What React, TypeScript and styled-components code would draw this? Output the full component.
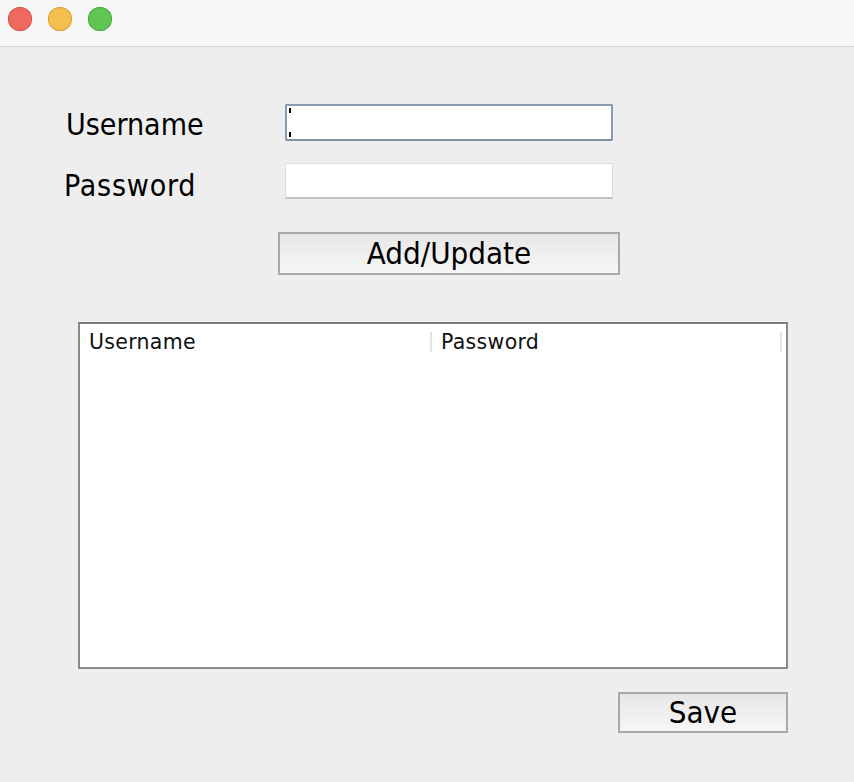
import React from "react";
import styled, { createGlobalStyle } from "styled-components";

const Global = createGlobalStyle`
  html, body { margin: 0; padding: 0; background: #eeeeee; }
  body { font-family: "DejaVu Sans", "Liberation Sans", sans-serif; color: #000; }
`;

const Window = styled.div`
  width: 854px;
  height: 782px;
  display: flex;
  flex-direction: column;
  background: #eeeeee;
  overflow: hidden;
`;

const TitleBar = styled.div`
  flex: none;
  box-sizing: border-box;
  height: 47px;
  background: #f6f6f6;
  border-bottom: 1px solid #d4d4d4;
  display: flex;
  align-items: flex-start;
  gap: 16px;
  padding: 7px 0 0 8px;
`;

const Light = styled.span<{ $fill: string; $edge: string }>`
  width: 24px;
  height: 24px;
  border-radius: 50%;
  background: ${(p) => p.$fill};
  box-shadow: inset 0 0 0 1px ${(p) => p.$edge};
`;

const Content = styled.div`
  display: flex;
  flex-direction: column;
  padding-top: 57px;
`;

const FormGrid = styled.div`
  display: grid;
  grid-template-columns: 221px 328px;
  row-gap: 22px;
  margin-left: 64px;
  align-items: start;
`;

const Label = styled.div<{ $shift?: number; $pad: number; $track?: number }>`
  font-family: "DejaVu Sans Condensed", "DejaVu Sans", sans-serif;
  font-size: 30px;
  line-height: 20px;
  letter-spacing: ${(p) => p.$track ?? 0}px;
  padding-left: ${(p) => p.$shift ?? 0}px;
  padding-top: ${(p) => p.$pad}px;
`;

const Field = styled.div<{ $focused?: boolean }>`
  box-sizing: border-box;
  height: ${(p) => (p.$focused ? 37 : 36)}px;
  background: #fff;
  border: ${(p) => (p.$focused ? "2px solid #8b9bb0" : "1px solid #dddddd")};
  border-bottom: ${(p) => (p.$focused ? "2px solid #7f8fa6" : "2px solid #c4c4c4")};
  border-radius: ${(p) => (p.$focused ? "2px" : "0")};
  display: flex;
  flex-direction: column;
  justify-content: space-between;
  padding: 2px 0 2px 2px;
`;

const CaretTick = styled.span`
  width: 2px;
  height: 5px;
  background: #000;
`;

const ButtonRow = styled.div<{ $top: number; $left: number }>`
  display: flex;
  margin-top: ${(p) => p.$top}px;
  padding-left: ${(p) => p.$left}px;
`;

const Button = styled.button<{ $w: number; $h: number }>`
  box-sizing: border-box;
  width: ${(p) => p.$w}px;
  height: ${(p) => p.$h}px;
  border: 2px solid #a9a9a9;
  background: linear-gradient(#e6e6e6, #f6f6f6);
  font-family: "DejaVu Sans Condensed", "DejaVu Sans", sans-serif;
  font-size: 31px;
  color: #000;
  padding: 0 0 2px 0;
  display: flex;
  align-items: center;
  justify-content: center;
`;

const Table = styled.div`
  box-sizing: border-box;
  margin-top: 47px;
  margin-left: 78px;
  width: 710px;
  height: 347px;
  background: #fff;
  border: 2px solid #8a8a8a;
  border-top-color: #7a7a7a;
  display: flex;
  flex-direction: column;
`;

const HeaderRow = styled.div`
  display: grid;
  grid-template-columns: 352px 350px;
  padding-top: 8px;
`;

const HeaderCell = styled.div`
  display: flex;
  align-items: center;
  height: 20px;
  font-size: 20.5px;
  letter-spacing: 0.3px;
  color: #111;
  padding-left: 9px;
  border-right: 2px solid #e2e2e2;
  box-sizing: border-box;
`;

const Cols = ["Username", "Password"];

export default function App() {
  return (
    <>
      <Global />
      <Window>
        <TitleBar>
          <Light $fill="#ee6a5f" $edge="#d6574c" />
          <Light $fill="#f5bf4f" $edge="#d9a23d" />
          <Light $fill="#61c554" $edge="#4eab41" />
        </TitleBar>
        <Content>
          <FormGrid>
            <Label $shift={2} $pad={11}>Username</Label>
            <Field $focused>
              <CaretTick />
              <CaretTick />
            </Field>
            <Label $pad={13} $track={0.8}>Password</Label>
            <Field />
          </FormGrid>
          <ButtonRow $top={33} $left={278}>
            <Button $w={342} $h={43}>Add/Update</Button>
          </ButtonRow>
          <Table>
            <HeaderRow>
              {Cols.map((c) => (
                <HeaderCell key={c}>{c}</HeaderCell>
              ))}
            </HeaderRow>
          </Table>
          <ButtonRow $top={23} $left={618}>
            <Button $w={170} $h={41}>Save</Button>
          </ButtonRow>
        </Content>
      </Window>
    </>
  );
}
